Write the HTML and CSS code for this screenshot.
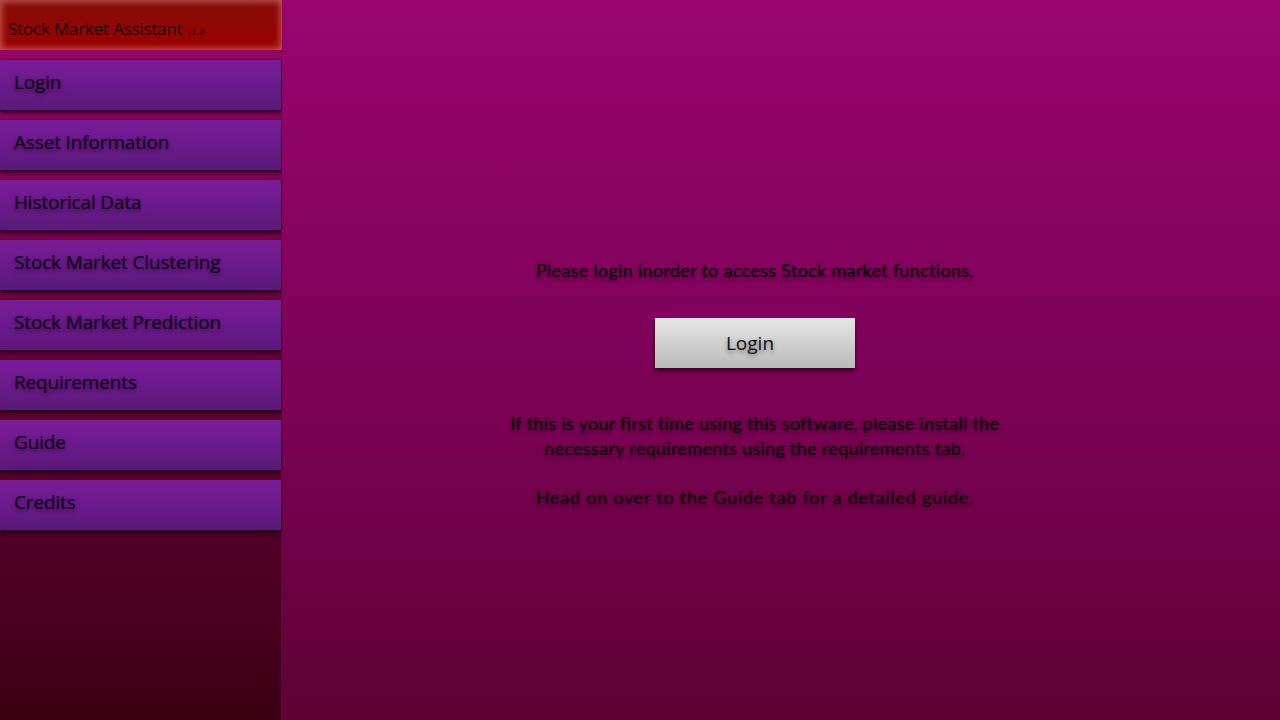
FILE: index.html
```html
<!DOCTYPE html>
<html>
<head>
<meta charset="utf-8">
<link rel="stylesheet" href="styles.css">
</head>
<body>
<div class="app">
  <aside class="sidebar">
    <div class="brand">Stock Market Assistant <span class="ver">v1.0</span></div>
    <nav class="nav">
      <div class="nav-item">Login</div>
      <div class="nav-item">Asset Information</div>
      <div class="nav-item">Historical Data</div>
      <div class="nav-item">Stock Market Clustering</div>
      <div class="nav-item">Stock Market Prediction</div>
      <div class="nav-item">Requirements</div>
      <div class="nav-item">Guide</div>
      <div class="nav-item">Credits</div>
    </nav>
  </aside>
  <main class="main">
    <div class="content">
      <p class="msg">Please login inorder to access Stock market functions.</p>
      <button class="login-btn">Login</button>
      <p class="msg info">If this is your first time using this software, please install the<br>necessary requirements using the requirements tab.</p>
      <p class="msg guide">Head on over to the Guide tab for a detailed guide.</p>
    </div>
  </main>
</div>
</body>
</html>
```
FILE: styles.css
```css
html, body {
  margin: 0;
  padding: 0;
  width: 1280px;
  height: 720px;
  overflow: hidden;
}
.app {
  display: flex;
  width: 1280px;
  height: 720px;
  font-family: "Open Sans", "Noto Sans", sans-serif;
}
.sidebar {
  width: 281px;
  flex: none;
  height: 720px;
  background: linear-gradient(to bottom, #9a066f 0%, #7c0350 30%, #55012a 70%, #3c0012 100%);
  border-right: 1px solid #5a0a40;
  display: flex;
  flex-direction: column;
}
.brand {
  height: 50px;
  box-sizing: border-box;
  width: 282px;
  padding: 17px 8px 0;
  font-size: 17px;
  color: #1a0000;
  background: linear-gradient(to bottom, #850e08, #9a0000);
  box-shadow: inset 0 0 6px 2px rgba(210, 110, 100, 0.75);
  letter-spacing: -0.2px;
  white-space: nowrap;
}
.ver {
  font-size: 9px;
  font-family: "Liberation Serif", serif;
  font-style: italic;
  letter-spacing: 0.5px;
}
.nav {
  display: flex;
  flex-direction: column;
  gap: 10px;
  padding-top: 10px;
}
.nav-item {
  height: 50px;
  box-sizing: border-box;
  padding: 9px 14px 0;
  font-size: 19px;
  color: #0e0014;
  background: linear-gradient(to bottom, #7a1c98 0%, #6b1a8c 50%, #5a1a78 100%);
  box-shadow: 0 3px 4px rgba(20, 0, 10, 0.75), 1px 0 2px rgba(20, 0, 10, 0.4);
  text-shadow: 0 2px 4px rgba(0, 0, 0, 0.55);
  letter-spacing: -0.15px;
  white-space: nowrap;
}
.main {
  flex: 1;
  height: 720px;
  background: linear-gradient(to bottom, #98056f 0%, #7e0258 50%, #5f0235 100%);
  display: flex;
  justify-content: center;
  padding-right: 52px;
}
.content {
  display: flex;
  flex-direction: column;
  align-items: center;
  padding-top: 258px;
  font-family: "Lato", "Noto Sans", sans-serif;
}
.msg {
  margin: 0;
  font-size: 18px;
  line-height: 25px;
  color: #0a0006;
  text-align: center;
  text-shadow: 0 2px 4px rgba(0, 0, 0, 0.55);
  letter-spacing: 0.3px;
}
.login-btn {
  margin-top: 35px;
  width: 200px;
  height: 50px;
  border: none;
  padding: 0 10px 0 0;
  font-family: "Open Sans", "Noto Sans", sans-serif;
  font-size: 19px;
  color: #111;
  background: linear-gradient(to bottom, #e6e6e6, #bababa);
  box-shadow: 0 3px 4px rgba(20, 0, 10, 0.7);
  text-shadow: 0 2px 4px rgba(0, 0, 0, 0.45);
}
.info {
  margin-top: 43px;
}
.guide {
  margin-top: 24px;
  letter-spacing: 0.75px;
}
```
